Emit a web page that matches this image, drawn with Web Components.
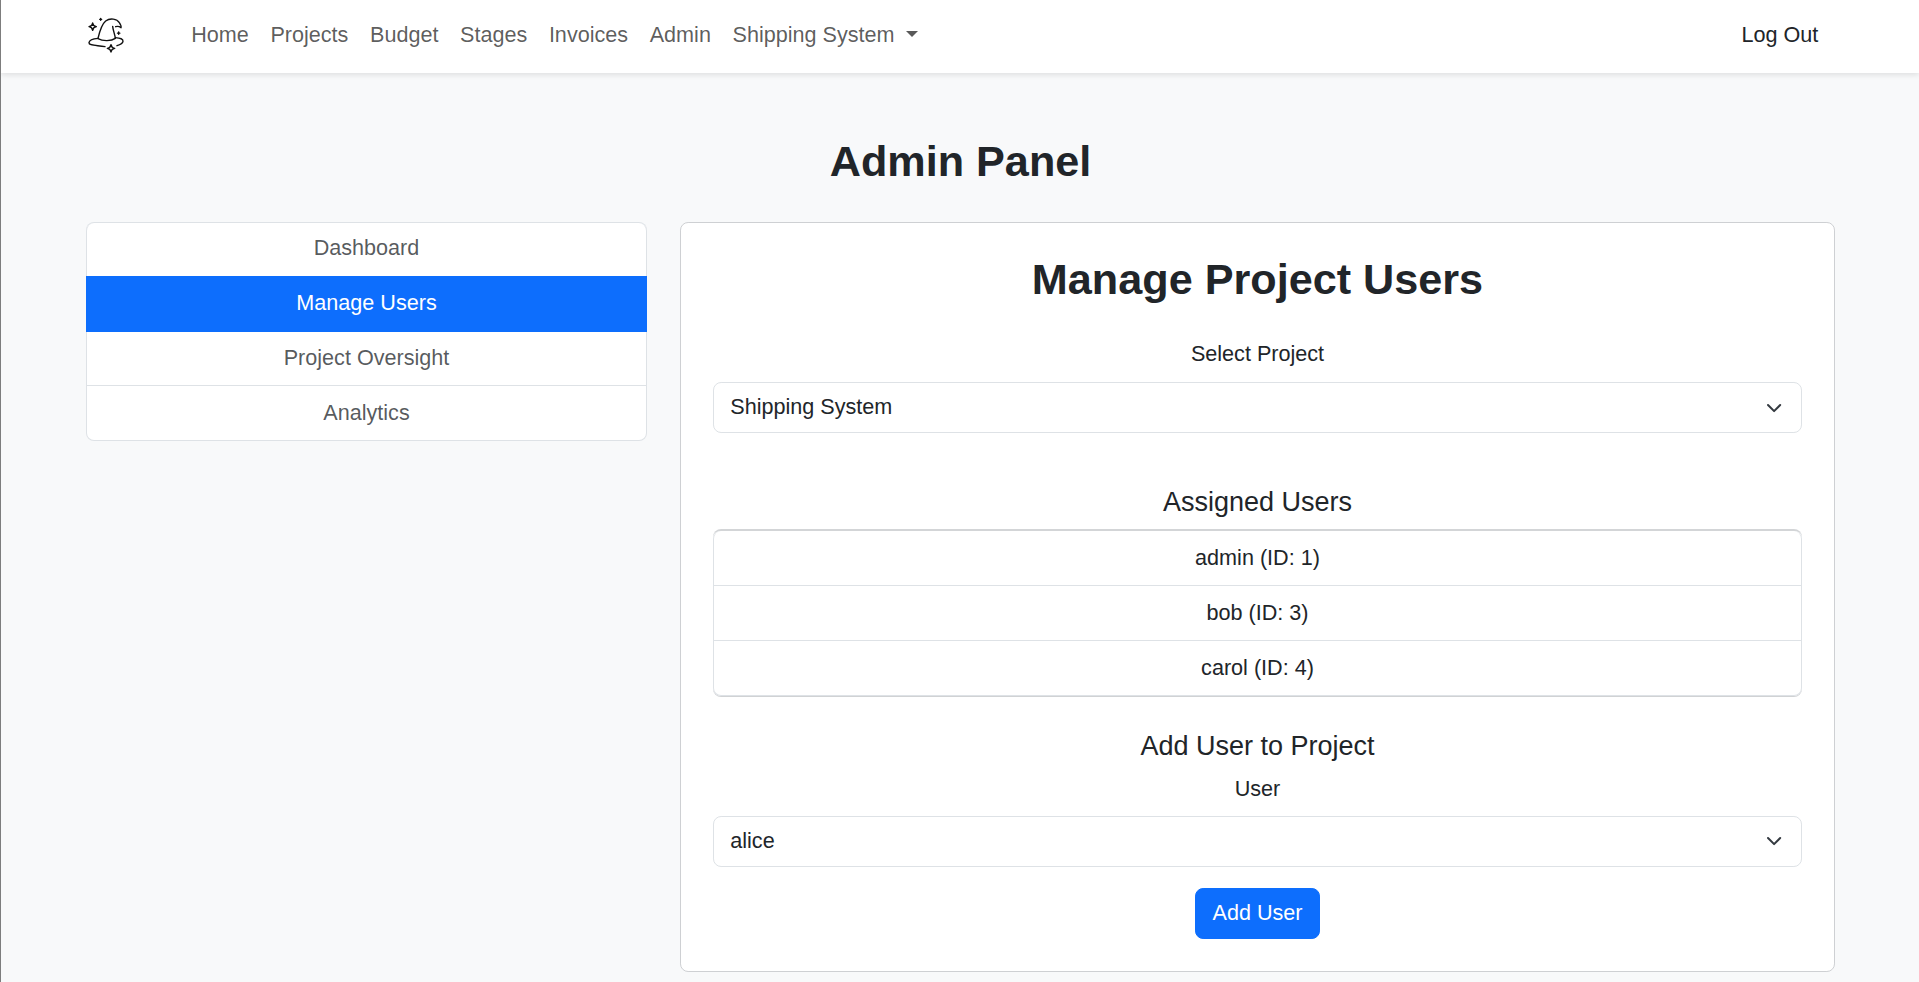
<!DOCTYPE html>
<html lang="en">
<head>
<meta charset="utf-8">
<title>Admin Panel</title>
<style>
  html { font-size: 21.6px; }
  body {
    margin: 0; height: 982px; box-sizing: border-box; overflow: hidden;
    border-left: 1px solid #7d7d7d; background: #f8f9fa; color: #212529;
    font: 400 1rem/1.5 "Liberation Sans", Arial, sans-serif;
  }
</style>
</head>
<body>
<app-navbar>
  <nav-item>Home</nav-item><nav-item>Projects</nav-item><nav-item>Budget</nav-item><nav-item>Stages</nav-item><nav-item>Invoices</nav-item><nav-item>Admin</nav-item><nav-item dropdown>Shipping System</nav-item>
  <span slot="end">Log Out</span>
</app-navbar>
<admin-page>
  <span slot="title">Admin Panel</span>
  <list-group slot="side" muted>
    <list-item>Dashboard</list-item>
    <list-item active>Manage Users</list-item>
    <list-item>Project Oversight</list-item>
    <list-item>Analytics</list-item>
  </list-group>
  <panel-card>
    <span slot="title">Manage Project Users</span>
    <select-field class="project" label="Select Project">Shipping System</select-field>
    <panel-section class="assigned" heading="Assigned Users">
      <list-group raised>
        <list-item>admin (ID: 1)</list-item>
        <list-item>bob (ID: 3)</list-item>
        <list-item>carol (ID: 4)</list-item>
      </list-group>
    </panel-section>
    <panel-section heading="Add User to Project">
      <select-field label="User">alice</select-field>
      <primary-button>Add User</primary-button>
    </panel-section>
  </panel-card>
</admin-page>
<script>
const define = (name, html, setup) => {
  const template = document.createElement('template');
  template.innerHTML = html;
  customElements.define(name, class extends HTMLElement {
    constructor() {
      super();
      this.attachShadow({ mode: 'open' }).append(template.content.cloneNode(true));
    }
    connectedCallback() { if (setup) setup(this, this.shadowRoot); }
  });
};

define('wizard-logo', `
<style>
  :host { display: block; width: 36px; height: 37px; }
  svg { display: block; width: 36px; height: 37px; overflow: visible; }
</style>
<svg viewBox="54 48 108 111" fill="none" stroke="#111" stroke-width="4.2" stroke-linecap="round" stroke-linejoin="round">
  <path d="M84 115C88 98 96 72 107 63C120 53 141 56 148 68C152 74 154 80 153 83C148 79 143 78 137 80"/>
  <path d="M128 79C129 90 134 102 136 114"/>
  <path d="M84 116C98 124 124 124 136 115"/>
  <path d="M84 115C70 116 58 121 57 128C57 136 70 135 105 140"/>
  <path d="M136 113C151 114 160 117 159 124C158 130 150 134 141 137"/>
  <path d="M68 69Q69.500 78.500 79 80Q69.500 81.500 68 91Q66.500 81.500 57 80Q66.500 78.500 68 69Z"/>
  <path d="M123 134Q124.500 143.500 134 145Q124.500 146.500 123 156Q121.500 146.500 112 145Q121.500 143.500 123 134Z"/>
  <path d="M92 55V61M89 58H95M146 96V103M142.500 99.500H149.500"/>
</svg>`);

define('nav-item', `
<style>
  :host { display: flex; align-items: center; padding: 0 .5rem; color: rgba(0,0,0,.65); white-space: pre; }
  i { display: none; margin: -2px 0 0 .533em; border: .3em solid transparent; border-top-color: currentColor; border-bottom: 0; }
  :host([dropdown]) i { display: block; }
</style>
<slot></slot><i></i>`);

define('app-navbar', `
<style>
  :host { display: block; height: 73px; padding-left: 1px; background: #fff; box-shadow: 0 .125rem .25rem rgba(0,0,0,.1); position: relative; }
  nav { box-sizing: border-box; width: 1749.6px; height: 69px; margin: 0 auto; padding: 0 17px 0 2px; display: flex; align-items: center; }
  .links { display: flex; margin: 2px 0 0 56.7px; flex: 1; }
  .end { margin-top: 2px; }
</style>
<nav><wizard-logo></wizard-logo><div class="links"><slot></slot></div><div class="end"><slot name="end"></slot></div></nav>`);

define('admin-page', `
<style>
  :host { display: block; width: 1749.6px; margin: 0 auto; padding: 63.3px 0 0 1px; }
  h1 { margin: 0 0 33.4px; font-size: 2rem; line-height: 1.2; font-weight: 700; text-align: center; }
  .columns { display: grid; grid-template-columns: 561.6px 1fr; gap: 1.5rem; align-items: start; }
</style>
<h1><slot name="title"></slot></h1>
<div class="columns"><aside><slot name="side"></slot></aside><main><slot></slot></main></div>`);

define('list-group', `
<style>
  :host { display: block; border-radius: .375rem; border-top: 1px solid #dee2e6; text-align: center; }
  :host([muted]) { color: rgba(33,37,41,.75); }
  :host([raised]) { border-top: 2px solid #d3d5d7; box-shadow: 0 1px #d0d2d4; }
  :host([muted]) ::slotted(:first-child) { padding-top: calc(.5rem - 1px); }
</style>
<slot></slot>`, (host) => {
  const items = host.children;
  items[0].style.borderRadius = '.375rem .375rem 0 0';
  items[items.length - 1].style.borderRadius = '0 0 .375rem .375rem';
});

define('list-item', `
<style>
  :host { display: block; padding: .5rem 0; border: 1px solid #dee2e6; border-top: 0; background: #fff; }
  :host([active]) { background: #0d6efd; border-color: #0d6efd; color: #fff; box-shadow: 0 -1px #0d6efd; }
</style>
<slot></slot>`);

define('panel-card', `
<style>
  :host { display: block; box-sizing: border-box; padding: calc(1.5rem - .7px) 1.5rem 1.5rem; border: 1px solid #ced0d3; border-radius: .375rem; background: #fff; text-align: center; }
  h2 { margin: 0 0 1.5rem; font-size: 2rem; line-height: 1.2; font-weight: 700; }
  ::slotted(.project) { --label-gap: calc(.5rem + .7px); }
  ::slotted(.assigned) { margin-top: 53.1px; margin-bottom: 33.6px; }
</style>
<h2><slot name="title"></slot></h2>
<slot></slot>`);

define('panel-section', `
<style>
  :host { display: block; }
  h3 { margin: 0 0 .5rem; font-size: 1.25rem; line-height: 1.2; font-weight: 400; }
</style>
<h3></h3><slot></slot>`, (host, root) => {
  root.querySelector('h3').textContent = host.getAttribute('heading');
});

define('select-field', `
<style>
  :host { display: block; }
  label { display: block; margin-bottom: var(--label-gap, .5rem); }
  .control { display: flex; align-items: center; justify-content: space-between; padding: .375rem .75rem; border: 1px solid #dee2e6; border-radius: .375rem; background: #fff; }
  svg { width: 16.2px; height: 16.2px; margin-right: 2.7px; }
</style>
<label></label>
<div class="control" role="combobox"><slot></slot><svg viewBox="0 0 16 16" fill="none" stroke="#343a40" stroke-width="2" stroke-linecap="round" stroke-linejoin="round"><path d="m2 5 6 6 6-6"/></svg></div>`, (host, root) => {
  root.querySelector('label').textContent = host.getAttribute('label');
});

define('primary-button', `
<style>
  :host { display: flex; justify-content: center; margin-top: 1rem; }
  button { font: inherit; color: #fff; background: #0d6efd; border: 1px solid #0d6efd; border-radius: .375rem; padding: .375rem .75rem; }
</style>
<button type="button"><slot></slot></button>`);
</script>
</body>
</html>
